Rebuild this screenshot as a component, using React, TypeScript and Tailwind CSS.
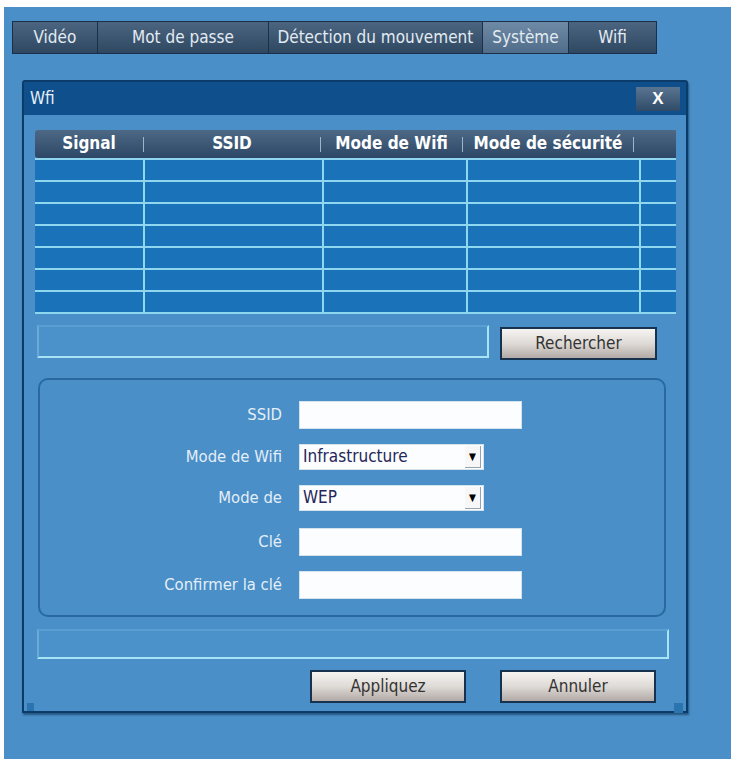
import React from "react";

const font = "font-['DejaVu_Sans_Condensed','DejaVu_Sans',sans-serif]";

function Tab({ label, w, active }: { label: string; w: string; active?: boolean }) {
  return (
    <div
      className={`${w} h-full flex items-center justify-center border-r border-[#1b3048] last:border-r-0 text-[17px] text-[#e3ebf2] ${
        active
          ? "bg-gradient-to-b from-[#6f8aa5] to-[#4f6c8a]"
          : "bg-gradient-to-b from-[#4b6580] to-[#2f4862]"
      }`}
    >
      {label}
    </div>
  );
}

function Btn({ label, w }: { label: string; w: string }) {
  return (
    <div
      className={`${w} h-[33px] flex items-center justify-center border-2 border-[#17324f] bg-gradient-to-b from-[#f6f4f2] via-[#dedad6] to-[#b3aaa6] text-[17px] text-[#333333]`}
    >
      {label}
    </div>
  );
}

function Field({ label, children }: { label: string; children: React.ReactNode }) {
  return (
    <div className="flex items-center">
      <div className="w-[259px] text-right pr-[17px] text-[16.5px] text-[#e4eef7]">{label}</div>
      {children}
    </div>
  );
}

function TextBox() {
  return <div className="w-[223px] h-[28px] bg-[#fbfdfe] border border-[#d3e3ee]" />;
}

function Select({ value }: { value: string }) {
  return (
    <div className="w-[185px] h-[26px] bg-[#fbfdfe] flex items-center border border-[#d3e3ee]">
      <div className="flex-1 pl-[3px] text-[17px] text-[#26265a]">{value}</div>
      <div className="w-[16px] h-[22px] mr-[2px] flex items-center justify-center border-r border-b border-[#9aa3ab] bg-[#f7f7f7] text-[10px] text-black">
        ▼
      </div>
    </div>
  );
}

export default function App() {
  const cols = "grid-cols-[108px_177px_142px_171px_1fr]";
  const rows = Array.from({ length: 7 });
  return (
    <div className={`w-[731px] h-[759px] bg-white pl-[4px] pt-[7px] ${font}`}>
      <div className="w-full h-full bg-[#4a8fc7] pt-[14px] pl-[8px]">
        {/* tabs */}
        <div className="flex h-[33px] w-[645px] border border-[#1b3048]">
          <Tab label="Vidéo" w="w-[85px]" />
          <Tab label="Mot de passe" w="w-[172px]" />
          <Tab label="Détection du mouvement" w="w-[214px]" />
          <Tab label="Système" w="w-[87px]" active />
          <Tab label="Wifi" w="w-[87px]" />
        </div>

        {/* dialog */}
        <div className="ml-[10px] mt-[26px] w-[666px] h-[633px] border-2 border-[#0b3b68] rounded-t-[3px] flex flex-col bg-[#4a8fc7] shadow-[1px_2px_2px_rgba(0,30,60,0.5)]">
          <div className="h-[33px] shrink-0 bg-[#0f4f8b] flex items-center justify-between pl-[6px] pr-[6px]">
            <span className="text-[17px] text-[#e6eef6]">Wfi</span>
            <div className="w-[44px] h-[24px] bg-gradient-to-b from-[#5a7591] to-[#2f4b68] flex items-center justify-center text-white font-bold text-[17px] font-['Liberation_Sans',sans-serif]">
              X
            </div>
          </div>

          <div className="flex flex-col pl-[11px] pr-[10px]">
            {/* table */}
            <div className="mt-[15px] w-[641px]">
              <div className={`grid ${cols} h-[28px] bg-gradient-to-b from-[#4d6986] to-[#2c4866] rounded-l-[3px] text-white font-bold text-[17px]`}>
                {["Signal", "SSID", "Mode de Wifi", "Mode de sécurité", ""].map((h, i) => (
                  <div key={i} className="flex items-center">
                    {i > 0 && <div className="w-px h-[15px] bg-[#9fb4c8]" />}
                    <div className="flex-1 text-center whitespace-nowrap">{h}</div>
                  </div>
                ))}
              </div>
              <div className={`grid ${cols} gap-[2px] bg-[#8fd6ef] py-[2px]`}>
                {rows.map((_, r) =>
                  [0, 1, 2, 3, 4].map((c) => <div key={`${r}-${c}`} className="h-[20px] bg-[#1a72b8]" />)
                )}
              </div>
            </div>

            {/* search row */}
            <div className="flex items-start mt-[11px]">
              <div className="ml-[2px] w-[452px] h-[33px] border-2 border-t-[#5b9ed2] border-l-[#6aa9da] border-r-[#a6e4f6] border-b-[#a6e4f6] bg-[#4c92ca]" />
              <div className="ml-[11px] mt-[2px]">
                <Btn label="Rechercher" w="w-[157px]" />
              </div>
            </div>

            {/* group box */}
            <div className="ml-[3px] mt-[18px] w-[628px] h-[239px] rounded-[10px] border-2 border-[#2a69a0] flex flex-col pt-[21px] gap-[15px]">
              <Field label="SSID">
                <TextBox />
              </Field>
              <Field label="Mode de Wifi">
                <Select value="Infrastructure" />
              </Field>
              <Field label="Mode de">
                <Select value="WEP" />
              </Field>
              <div className="mt-[2px]">
                <Field label="Clé">
                  <TextBox />
                </Field>
              </div>
              <Field label="Confirmer la clé">
                <TextBox />
              </Field>
            </div>

            {/* status bar */}
            <div className="ml-[2px] mt-[12px] w-[632px] h-[30px] border-2 border-t-[#5b9ed2] border-l-[#6aa9da] border-r-[#a6e4f6] border-b-[#a6e4f6] bg-[#4c92ca]" />

            {/* buttons */}
            <div className="flex mt-[11px] pl-[275px] gap-[34px]">
              <Btn label="Appliquez" w="w-[156px]" />
              <Btn label="Annuler" w="w-[156px]" />
            </div>
          </div>

          {/* resize corners */}
          <div className="mt-auto flex justify-between px-[3px] pb-[1px]">
            <div className="w-[7px] h-[8px] bg-[#2a74b0]" />
            <div className="w-[9px] h-[10px] bg-[#2a74b0]" />
          </div>
        </div>
      </div>
    </div>
  );
}
